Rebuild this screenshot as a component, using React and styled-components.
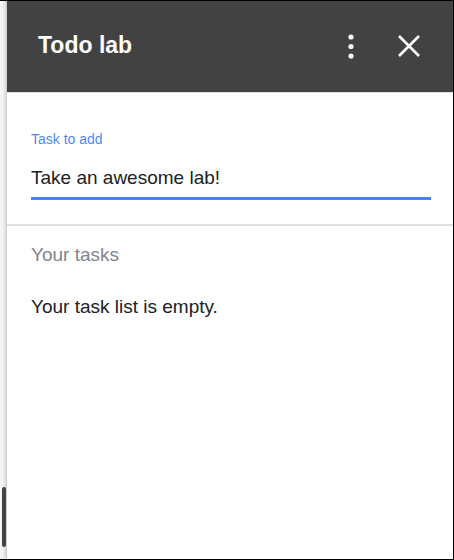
import React from "react";
import styled, { createGlobalStyle } from "styled-components";

const GlobalStyle = createGlobalStyle`
  html, body {
    margin: 0;
    padding: 0;
    background: #ffffff;
  }
  body {
    font-family: "Liberation Sans", Arial, sans-serif;
  }
`;

/* Todo lab side panel: header, add-task field and the task list */
const App = () => {
  return (
    <>
      <GlobalStyle />
      <Frame>
        <Track>
          <Thumb />
        </Track>
        <Panel>
          <Header>
            <Title>Todo lab</Title>
            <Actions>
              <IconButton aria-label="More options">
                <svg width="34" height="34" viewBox="0 0 34 34">
                  <circle cx="17" cy="8" r="2.6" fill="#fff" />
                  <circle cx="17" cy="17.5" r="2.6" fill="#fff" />
                  <circle cx="17" cy="27" r="2.6" fill="#fff" />
                </svg>
              </IconButton>
              <IconButton aria-label="Close">
                <svg width="34" height="34" viewBox="0 0 34 34">
                  <path
                    d="M7 7 L27 27 M27 7 L7 27"
                    stroke="#fff"
                    strokeWidth="2.6"
                    fill="none"
                  />
                </svg>
              </IconButton>
            </Actions>
          </Header>

          <AddSection>
            <FieldLabel>Task to add</FieldLabel>
            <TaskInput defaultValue="Take an awesome lab!" />
          </AddSection>

          <ListSection>
            <SectionTitle>Your tasks</SectionTitle>
            <EmptyText>Your task list is empty.</EmptyText>
          </ListSection>
        </Panel>
      </Frame>
    </>
  );
};

export default App;

// #region Stylings
const Frame = styled.div`
  display: flex;
  width: 454px;
  height: 560px;
  box-sizing: border-box;
  border-top: 1px solid #000;
  border-right: 1px solid #000;
  border-bottom: 1px solid #000;
  overflow: hidden;
`;

const Track = styled.div`
  width: 7px;
  flex-shrink: 0;
  display: flex;
  flex-direction: column;
  justify-content: flex-end;
  align-items: flex-end;
  padding-bottom: 12px;
  box-sizing: border-box;
  background: linear-gradient(to right, #f7f7f7 0%, #f0f0f0 45%, #d9d9d9 85%, #c8c8c8 100%);
`;

const Thumb = styled.div`
  width: 4px;
  height: 60px;
  margin-right: 1px;
  border-radius: 2px;
  background: #444444;
`;

const Panel = styled.div`
  flex: 1;
  display: flex;
  flex-direction: column;
  background: #ffffff;
`;

const Header = styled.div`
  height: 91px;
  display: flex;
  align-items: center;
  justify-content: space-between;
  padding: 0 27px 0 31px;
  background: #424242;
  border-bottom: 1px solid #e0e0e0;
`;

const Title = styled.h1`
  margin: 0 0 2px 0;
  font-size: 23px;
  font-weight: bold;
  color: #ffffff;
  user-select: none;
`;

const Actions = styled.div`
  display: flex;
  align-items: center;
  gap: 24px;
  margin-bottom: 2px;
`;

const IconButton = styled.button`
  display: flex;
  padding: 0;
  border: none;
  background: none;
  cursor: pointer;
`;

const AddSection = styled.div`
  display: flex;
  flex-direction: column;
  padding: 38px 22px 24px 24px;
  border-bottom: 2px solid #e0e0e0;
`;

const FieldLabel = styled.label`
  font-size: 14px;
  line-height: 16px;
  color: #4d8af0;
`;

const TaskInput = styled.input`
  margin-top: 18px;
  padding: 2px 0 8px 0;
  border: none;
  border-bottom: 3px solid #4285f4;
  outline: none;
  font-family: "Liberation Sans", Arial, sans-serif;
  font-size: 19px;
  line-height: 22px;
  color: #202124;
  background: transparent;
`;

const ListSection = styled.div`
  display: flex;
  flex-direction: column;
  padding: 18px 24px;
`;

const SectionTitle = styled.h2`
  margin: 0;
  font-size: 19px;
  font-weight: normal;
  line-height: 22px;
  color: #80868b;
`;

const EmptyText = styled.p`
  margin: 30px 0 0 0;
  font-size: 19px;
  line-height: 22px;
  color: #202124;
`;
// #endregion
